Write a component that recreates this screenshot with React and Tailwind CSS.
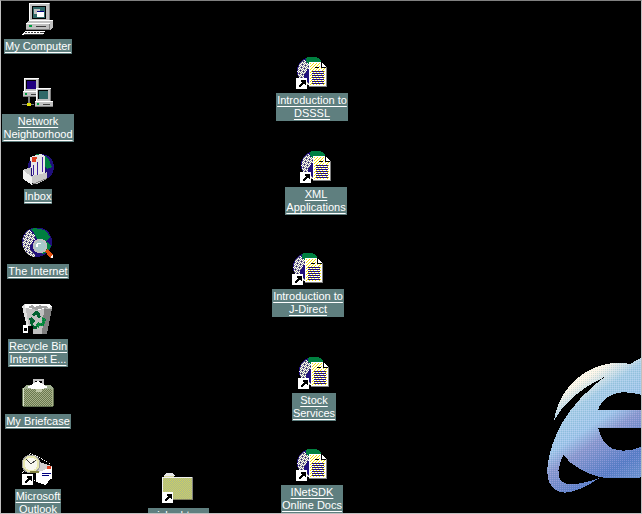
import React from "react";

const font = { fontFamily: '"Liberation Sans", Arial, sans-serif' };

// shared patterns for the dithered 16 colour icons
const Defs = () => (
  <svg className="absolute w-0 h-0">
    <defs>
      <pattern id="dGreen" width="2" height="2" patternUnits="userSpaceOnUse">
        <rect width="2" height="2" fill="#008040" />
        <rect width="1" height="1" fill="#20a040" />
      </pattern>
      <pattern id="dIe" width="6" height="6" patternUnits="userSpaceOnUse">
        <rect width="3" height="3" fill="#ffffff" fillOpacity="0.2" />
        <rect x="3" y="3" width="3" height="3" fill="#40a0a0" fillOpacity="0.2" />
      </pattern>
      <linearGradient id="ieFill" x1="0.25" y1="0.05" x2="0.7" y2="1">
        <stop offset="0" stopColor="#fff8ec" />
        <stop offset="0.15" stopColor="#fff6e8" />
        <stop offset="0.3" stopColor="#a8cce8" />
        <stop offset="0.48" stopColor="#a0c4ec" />
        <stop offset="0.6" stopColor="#8a94d0" />
        <stop offset="0.85" stopColor="#5878c8" />
        <stop offset="1" stopColor="#6a8cd0" />
      </linearGradient>
    </defs>
  </svg>
);

const Px = ({ children }) => (
  <svg width="32" height="32" viewBox="0 0 32 32" shapeRendering="crispEdges" className="shrink-0">
    {children}
  </svg>
);

// checkerboard of single pixels, drawn one by one so that it stays crisp
const Dots = ({ x, y, w, h, color, every = 2 }) => {
  const cells = [];
  for (let j = 0; j < h; j++) {
    for (let i = 0; i < w; i++) {
      if ((i + j) % every === 0) {
        cells.push(<rect key={`${i}-${j}`} x={x + i} y={y + j} width="1" height="1" fill={color} />);
      }
    }
  }
  return <g>{cells}</g>;
};

// grey and white land on the left of a globe, clipped to its circle
const Land = ({ cx, cy, r }) => {
  const cells = [];
  for (let y = cy - r; y <= cy + r; y++) {
    const half = Math.sqrt(Math.max(0, r * r - (y - cy) * (y - cy)));
    const edge = cx - 5 - 3 * Math.sin((y - cy) / 3);
    for (let x = Math.ceil(cx - half); x < edge; x++) {
      const even = (x + y) % 2 === 0;
      const fill = even ? "#8c8c8c" : (y + x * 3) % 5 === 0 ? "#20107c" : "#ffffff";
      cells.push(<rect key={`${x}-${y}`} x={x} y={y} width="1" height="1" fill={fill} />);
    }
  }
  return <g>{cells}</g>;
};

const Shortcut = ({ x = 0, y = 21 }) => (
  <g transform={`translate(${x} ${y})`}>
    <rect width="11" height="11" fill="#fff" />
    <path d="M5 2h5v5H8.500V5.500L4 9.500 2.500 8l4-4H5z" fill="#000" />
  </g>
);

const Globe = ({ cx = 15, cy = 14, r = 14 }) => (
  <g>
    <circle cx={cx} cy={cy} r={r} fill="#20107c" />
    <path d={`M${cx - 5} ${cy - 13}q7 -3 14 1l3 6-5 3-7 -1-5 -3z`} fill="#008040" />
    <path d={`M${cx + 1} ${cy + 3}l7 -2 5 3-3 6-5 3-4 -4z`} fill="#008040" />
    <Land cx={cx} cy={cy} r={r} />
  </g>
);

const Doc = ({ x = 13, y = 5 }) => (
  <g transform={`translate(${x} ${y})`}>
    <path d="M0 0h12l5 5v19H0z" fill="#fff" />
    <Dots x={1} y={1} w={10} h={22} color="#f0e000" every={3} />
    <Dots x={12} y={6} w={4} h={17} color="#f0e000" every={3} />
    <path d="M12 0v5h5" fill="none" stroke="#000" strokeWidth="1" />
    <rect x="6" y="5" width="4" height="1" fill="#000" />
    <rect x="3" y="9" width="12" height="1" fill="#20107c" />
    <rect x="3" y="11" width="12" height="1" fill="#20107c" />
    <rect x="3" y="13" width="12" height="1" fill="#20107c" />
    <rect x="3" y="15" width="12" height="1" fill="#20107c" />
    <rect x="3" y="17" width="12" height="1" fill="#20107c" />
    <rect x="3" y="19" width="12" height="1" fill="#20107c" />
    <rect x="3" y="21" width="12" height="1" fill="#20107c" />
    <rect x="17" y="5" width="1" height="19" fill="#808080" />
    <rect y="24" width="18" height="1" fill="#808080" />
  </g>
);

const DocIcon = () => (
  <Px>
    <Globe />
    <Doc />
    <Shortcut />
  </Px>
);

const Computer = () => (
  <Px>
    <rect x="7" y="0" width="21" height="20" fill="#c0c0c0" />
    <path d="M7 0h20v1H8v19H7z" fill="#fff" />
    <path d="M27 1h1v19h-1z" fill="#808080" />
    <rect x="10" y="3" width="14" height="13" fill="#000" />
    <rect x="11" y="4" width="12" height="11" fill="#306868" />
    <rect x="12" y="6" width="6" height="5" fill="#c0c0c0" />
    <rect x="15" y="8" width="7" height="6" fill="#fff" />
    <rect x="15" y="8" width="7" height="1" fill="#000080" />
    <path d="M4 20l3 -3h24v7l-3 3H4z" fill="#c0c0c0" />
    <path d="M4 20h24v1H4zM7 17h24v1H7z" fill="#fff" />
    <path d="M28 21v6h-1v-6zM4 26h24v1H4z" fill="#808080" />
    <rect x="7" y="22" width="3" height="2" fill="#00a040" />
    <rect x="14" y="23" width="10" height="1" fill="#404040" />
    <path d="M3 28h20l-2 4H0z" fill="#fff" />
    <path d="M3 29h19v1H2zM2 31h19v1H1z" fill="#404040" />
    <path d="M5 29h1v2H5zM8 29h1v2H8zM11 29h1v2h-1zM14 29h1v2h-1zM17 29h1v2h-1z" fill="#fff" />
  </Px>
);

const SmallPc = ({ x, y, screen }) => (
  <g transform={`translate(${x} ${y})`}>
    <rect x="1" y="0" width="15" height="13" fill="#c0c0c0" />
    <path d="M1 0h15v1H2v12H1z" fill="#fff" />
    <rect x="15" y="1" width="1" height="12" fill="#808080" />
    <rect x="3" y="2" width="10" height="9" fill="#000" />
    <rect x="4" y="3" width="9" height="8" fill={screen} />
    <rect x="0" y="13" width="18" height="6" fill="#c0c0c0" />
    <rect x="0" y="13" width="18" height="1" fill="#fff" />
    <rect x="0" y="18" width="18" height="1" fill="#808080" />
    <rect x="2" y="15" width="2" height="2" fill="#00a040" />
    <rect x="8" y="16" width="7" height="1" fill="#404040" />
  </g>
);

const Network = () => (
  <Px>
    <SmallPc x={1} y={0} screen="#200080" />
    <rect x="6" y="19" width="2" height="6" fill="#808080" />
    <rect x="0" y="26" width="12" height="1" fill="#808080" />
    <rect x="5" y="25" width="4" height="3" fill="#e0e000" />
    <SmallPc x={13} y={10} screen="#306868" />
  </Px>
);

const Inbox = () => (
  <Px>
    <circle cx="19" cy="14" r="13" fill="#20107c" />
    <path d="M14 1q8 -1 13 6l3 7-5 2-5 -6z" fill="#008040" />
    <path d="M8 4l11 -3 4 2v19l-12 3z" fill="#e8e8e8" />
    <path d="M10 4h5l-1 5h-4z" fill="#e04020" />
    <path d="M11 12h1v10h-1zM15 9h1v13h-1zM20 4h1v15h-1z" fill="#4020a0" />
    <path d="M1 17l8 -3v9l10 -2 6 -2v7l-10 5-5 -1-9 -6z" fill="#c8c8c8" />
    <path d="M1 17l9 7v8l-9 -6z" fill="#f0f0f0" />
    <path d="M10 31l15 -6v1l-15 6z" fill="#808080" />
  </Px>
);

const Internet = () => (
  <Px>
    <circle cx="15" cy="14" r="15" fill="#20107c" />
    <path d="M9 1q7 -2 15 2l4 6-4 4-9 -2-3 -6z" fill="#008040" />
    <path d="M18 18l7 -4 4 4-3 6-6 2z" fill="#008040" />
    <Land cx={15} cy={14} r={15} />
    <path d="M23 23l2 -2 6 6v3h-3z" fill="#e05010" />
    <path d="M28 29l2 -2 1 1v2h-2z" fill="#fff" />
    <circle cx="18" cy="18" r="6.500" fill="#a8c8c8" stroke="#c0c0c0" strokeWidth="1.500" />
    <path d="M15 15h4v1h-4zM14 16h2v3h-2z" fill="#fff" />
  </Px>
);

const Recycle = () => (
  <Px>
    <path d="M0 3l3 -2h24l3 3-5 27H8z" fill="#c0c0c0" />
    <path d="M0 3l6 26h2L3 2z" fill="#e0e0e0" />
    <path d="M22 6h8l-5 25h-5z" fill="#808080" />
    <path d="M3 1h24l3 3-13 3L3 5z" fill="#fff" />
    <path d="M6 4l4 -2 3 2 5 -2 4 3-8 2zM20 3l5 0 1 2-4 1z" fill="#a0a0a0" />
    <path d="M10 11l4 -3 3 1 2 5-3 1-2 -4-2 3z" fill="#006030" />
    <path d="M20 14l4 2-2 7h-5v3l-4 -4 4 -4v2h3z" fill="url(#dGreen)" />
    <path d="M7 15l3 -1 3 4-2 2 1 3h3v3h-5z" fill="#006030" />
    <rect x="0" y="23" width="11" height="9" fill="#000" />
    <rect x="1" y="22" width="5" height="8" fill="#fff" />
    <rect x="2" y="25" width="3" height="3" fill="#000" />
  </Px>
);

const Briefcase = () => (
  <Px>
    <path d="M11 5V1h11v5h-2V3h-7v3z" fill="#c0c0c0" />
    <path d="M1 10l3 -3h24l3 3v18H1z" fill="#a8b088" />
    <Dots x={2} y={11} w={28} h={17} color="#687850" />
    <path d="M1 10l3 -3h24l3 3v1H1z" fill="#a0b090" />
    <path d="M5 9l11 -6 10 6-5 2H10z" fill="#fff" />
    <path d="M14 11h6v3h-6z" fill="#c0c8a8" />
    <path d="M0 10h1v18H0zM31 10h1v18h-1zM1 28h30v1H1z" fill="#607050" />
    <path d="M1 10h1v18H1z" fill="#d8e0c8" />
  </Px>
);

const Outlook = () => (
  <Px>
    <path d="M8 0l8 4 12 7-8 20-20 -9z" fill="none" stroke="#fff" strokeWidth="1" strokeDasharray="1 1" />
    <path d="M14 8l16 5v13H14z" fill="#fff" />
    <path d="M14 8l16 5v1l-16 6z" fill="#d0d0d0" />
    <rect x="25" y="13" width="4" height="3" fill="#e04020" />
    <rect x="20" y="20" width="9" height="1" fill="#000080" />
    <rect x="20" y="22" width="7" height="1" fill="#000080" />
    <path d="M14 26l14 0-4 6-10 -3z" fill="#fff" />
    <circle cx="9" cy="11" r="9" fill="#e8e8b0" stroke="#a0a0a0" strokeWidth="1" />
    <circle cx="9" cy="11" r="6.500" fill="#f8f8f0" />
    <path d="M4 6l5 5 5 -4" fill="none" stroke="#404040" strokeWidth="1" />
    <rect x="8" y="18" width="9" height="2" fill="#808040" />
    <Shortcut x={0} y={21} />
  </Px>
);

const Folder = () => (
  <Px>
    <path d="M2 4l2 -2h6l2 2v2H2z" fill="#d8d8a0" />
    <path d="M4 1h7l2 3H2z" fill="#e8e8e8" />
    <rect x="0" y="5" width="30" height="23" fill="#d0d060" />
    <Dots x={1} y={6} w={29} h={21} color="#a8b890" />
    <path d="M0 5h30v1H1v21H0z" fill="#f0f0f0" />
    <rect x="30" y="5" width="1" height="23" fill="#808080" />
    <rect x="0" y="27" width="31" height="1" fill="#808060" />
    <Shortcut x={0} y={20} />
  </Px>
);

const Label = ({ lines, width = "" }) => (
  <div className={`bg-[#5f7f7f] px-px py-px text-center text-white text-[11px] leading-[13px] whitespace-nowrap ${width}`}>
    {lines.map((line) => (
      <div key={line}>
        <span className="underline underline-offset-2">{line}</span>
      </div>
    ))}
  </div>
);

const items = [
  { pos: "left-[0px] top-[3px]", icon: <Computer />, lines: ["My Computer"] },
  { pos: "left-[0px] top-[78px]", icon: <Network />, lines: ["Network", "Neighborhood"] },
  { pos: "left-[0px] top-[153px]", icon: <Inbox />, lines: ["Inbox"] },
  { pos: "left-[0px] top-[228px]", icon: <Internet />, lines: ["The Internet"] },
  { pos: "left-[0px] top-[303px]", icon: <Recycle />, lines: ["Recycle Bin", "Internet E..."] },
  { pos: "left-[0px] top-[378px]", icon: <Briefcase />, lines: ["My Briefcase"] },
  { pos: "left-[0px] top-[453px]", icon: <Outlook />, lines: ["Microsoft", "Outlook"] },
  { pos: "left-[140px] top-[472px]", icon: <Folder />, lines: ["isbn.htm"], width: "w-[61px]" },
  { pos: "left-[274px] top-[57px]", icon: <DocIcon />, lines: ["Introduction to", "DSSSL"] },
  { pos: "left-[278px] top-[151px]", icon: <DocIcon />, lines: ["XML", "Applications"] },
  { pos: "left-[270px] top-[253px]", icon: <DocIcon />, lines: ["Introduction to", "J-Direct"] },
  { pos: "left-[276px] top-[357px]", icon: <DocIcon />, lines: ["Stock", "Services"] },
  { pos: "left-[274px] top-[449px]", icon: <DocIcon />, lines: ["INetSDK", "Online Docs"] },
];

const IE_PATH =
  "M72 242C82 165 140 90 230 72C265 66 290 70 300 72L336 52V412C300 418 250 415 212 412C170 440 130 458 105 458C70 458 50 430 52 385C54 340 75 290 95 250Z";

const IeLogo = () => (
  <svg
    width="112"
    height="174"
    viewBox="0 0 336 522"
    shapeRendering="crispEdges"
    className="absolute left-[530px] top-[340px]"
  >
    <path d={IE_PATH} fill="url(#ieFill)" />
    <path d={IE_PATH} fill="url(#dIe)" />
    <path d="M72 242C100 190 150 145 225 110C170 150 125 200 95 250Z" fill="#000" />
    <path d="M205 210C210 180 250 155 285 157C310 158 336 165 336 165V210Z" fill="#000" />
    <path d="M205 265H336V320C300 335 270 335 245 325C225 315 210 290 205 265Z" fill="#000" />
    <path d="M100 345C85 375 78 410 95 425C115 440 170 430 212 412C170 400 125 380 100 345Z" fill="#000" />
  </svg>
);

export default function App() {
  return (
    <div className="relative w-[642px] h-[514px] overflow-hidden bg-black" style={font}>
      <Defs />
      <IeLogo />
      {items.map((item) => (
        <div
          key={item.lines.join(" ")}
          className={`absolute ${item.pos} w-[76px] flex flex-col items-center gap-1`}
        >
          {item.icon}
          <Label lines={item.lines} width={item.width} />
        </div>
      ))}
      {/* window edge sits over the desktop */}
      <div className="absolute inset-0 pointer-events-none border border-[#c0c0c0] border-t-[#808080]" />
    </div>
  );
}
